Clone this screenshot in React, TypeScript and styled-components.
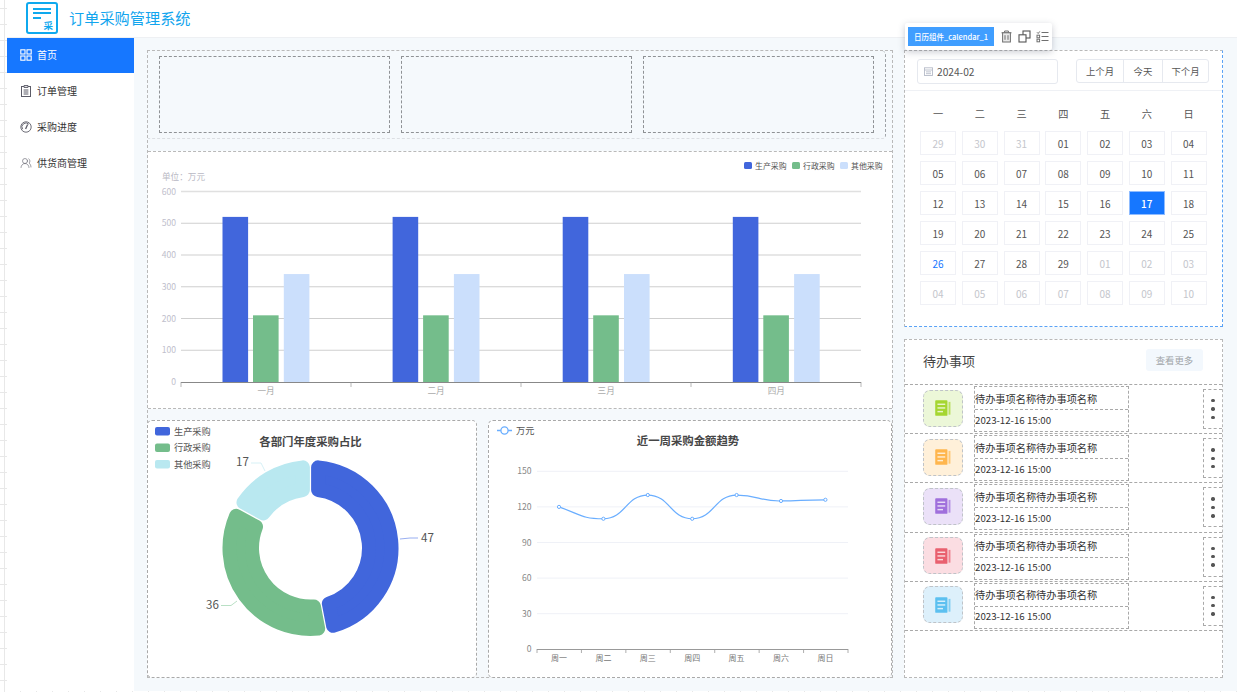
import React from "react";
import styled, { createGlobalStyle } from "styled-components";
import { UsersRound } from "lucide-react";

const Global = createGlobalStyle`
  html, body { margin: 0; padding: 0; background: #fff; }
  body { font-family: "Noto Sans CJK SC", "Noto Sans", sans-serif; color: #333; }
  * { box-sizing: border-box; }
`;
const DASH = "#a9a9a9";
const OUTER = "#b9b9b9";
const PAGE = "#f5f9fc";
const Canvas = styled.div`
  width: 1237px; height: 692px; overflow: hidden; padding-left: 7px; position: relative;
  background-color: #fff;
  background-image: linear-gradient(#e8e8e8 1px, transparent 1px), linear-gradient(90deg, #e8e8e8 1px, transparent 1px);
  background-size: 16px 16px; background-position: 4px 8px;
`;
const Header = styled.header`
  height: 38px; background: #fff; border-bottom: 1px solid #eef0f3; display: flex; align-items: center; padding-left: 19px; gap: 11px;
`;
const AppTitle = styled.div`font-size: 15.2px; color: #12a5ee; line-height: 1; margin-top: -1px;`;
const LogoBox = styled.div`
  width: 32px; height: 32px; border: 2px solid #0fa9ee; border-radius: 3px; position: relative; background: #fff; margin-top: -1px;
`;
const LogoBar = styled.span<{ $w: number; $t: number }>`
  position: absolute; left: 5px; top: ${p => p.$t}px; width: ${p => p.$w}px; height: 2px; background: #0fa9ee;
`;
const LogoChar = styled.span`
  position: absolute; right: 3px; bottom: 2px; font-size: 9.5px; line-height: 10px; font-weight: 700; color: #0fa9ee;
`;
const Body = styled.div`display: flex; height: 653px;`;
const Sidebar = styled.nav`width: 127px; background: #fff; flex: none;`;
const MenuItem = styled.div<{ $active?: boolean }>`
  height: ${p => (p.$active ? 35 : 36)}px; margin-bottom: ${p => (p.$active ? 1 : 0)}px;
  display: flex; align-items: center; gap: 5px; padding: 0 0 ${p => (p.$active ? 2 : 3)}px 13px; font-size: 10px;
  background: ${p => (p.$active ? "#1677ff" : "#fff")}; color: ${p => (p.$active ? "#fff" : "#333")};
`;
const Main = styled.main`
  flex: 1; background: ${PAGE}; display: flex; gap: 11px; padding: 12px 14px 13px 13px;
`;
const LeftCol = styled.div`
  width: 746px; flex: none; border: 1px dashed ${OUTER};
  display: flex; flex-direction: column; gap: 11px;
`;
const TopBlock = styled.div`
  height: 88px; width: 738px; margin-bottom: 1px; border-right: 1px dashed #9fa3a7; border-bottom: 1px dashed #dcdfe3; border-radius: 0 4px 4px 0;
  display: flex; gap: 11px; padding: 5px 11px 5px 11px; flex: none;
`;
const StatBox = styled.div`flex: 1; border: 1px dashed #8f9295; background: ${PAGE};`;
const BarPanel = styled.section`
  height: 258px; flex: none; background: #fff; border-top: 1px dashed ${OUTER}; border-bottom: 1px dashed ${OUTER};
`;
const BottomRow = styled.div`flex: 1; display: flex; gap: 11px; min-height: 0; margin: 0 -1px -1px -1px;`;
const ChartCard = styled.section<{ $w: number }>`
  width: ${p => p.$w}px; background: #fff; border: 1px dashed ${DASH}; border-radius: 5px; flex: none; overflow: hidden;
`;
const Chart = styled.svg`display: block; text { font-family: "Noto Sans CJK SC", "Noto Sans", sans-serif; }`;
const RightCol = styled.div`
  width: 319px; flex: none; display: flex; flex-direction: column; gap: 12px; position: relative;
`;
const Calendar = styled.section`
  height: 277px; flex: none; background: #fff; border: 1px dashed #5aa2f5; border-left-color: ${OUTER}; border-top-color: ${OUTER};
  position: relative;
`;
const CalTop = styled.div`
  height: 40px; display: flex; justify-content: space-between; align-items: flex-start; padding: 8px 13px 0 12px; border-bottom: 1px solid #eff1f5;
`;
const MonthInput = styled.div`
  width: 141px; height: 25px; border: 1px solid #e6e9ef; border-radius: 3px; display: flex; align-items: center; gap: 4px; padding-left: 6px;
  font-size: 10.2px; color: #555;
`;
const BtnGroup = styled.div`display: flex; height: 24px; border: 1px solid #e6e9ef; border-radius: 3px;`;
const CalBtn = styled.div<{ $w: number }>`
  width: ${p => p.$w}px; display: flex; align-items: center; justify-content: center; font-size: 9.4px; color: #555;
  & + & { border-left: 1px solid #e6e9ef; }
`;
const Weeks = styled.div`
  display: grid; grid-template-columns: repeat(7, 36px); column-gap: 5.75px; padding: 16px 0 0 15px; height: 40px;
`;
const Week = styled.div`font-size: 10.2px; line-height: 14px; text-align: center; color: #555;`;
const Days = styled.div`
  display: grid; grid-template-columns: repeat(7, 36px); column-gap: 5.75px; row-gap: 6px; grid-auto-rows: 24px; padding-left: 15px;
`;
const Day = styled.div<{ $k?: string }>`
  border: 1px solid ${p => (p.$k === "sel" ? "#8fbcff" : "#f0f1f6")}; display: flex; align-items: center; justify-content: center; font-size: 10px;
  background: ${p => (p.$k === "sel" ? "#1677ff" : "#fff")};
  font-weight: ${p => (p.$k === "sel" ? 500 : 400)};
  color: ${p => (p.$k === "sel" ? "#fff" : p.$k === "off" ? "#c4c6cc" : p.$k === "blue" ? "#1677ff" : "#555")};
`;
const Toolbar = styled.div`
  position: absolute; left: 0; top: -28px; width: 147px; height: 27px; background: #fff; border-radius: 2px; box-shadow: 0 2px 7px rgba(60,70,90,.28);
  display: flex; align-items: center; padding-left: 3px; gap: 5px; color: #6f6f6f; z-index: 3;
`;
const Badge = styled.div`
  width: 86px; height: 19px; background: #409eff; color: #fff; font-size: 7.5px; font-weight: 500; display: flex; align-items: center; justify-content: center; margin-right: 1px; white-space: nowrap;
`;
const Todo = styled.section`
  flex: 1; background: #fff; border: 1px dashed ${OUTER}; min-height: 0;
`;
const TodoHead = styled.div`
  height: 44px; display: flex; align-items: center; justify-content: space-between; padding: 0 19px 4px 18px;
`;
const TodoTitle = styled.h2`margin: 1px 0 0; font-size: 13px; font-weight: 400; color: #444;`;
const MoreBtn = styled.div`
  width: 57px; height: 22px; border-radius: 3px; background: #f3f8fd; font-size: 9.4px; color: #a0a4a8; display: flex; align-items: center; justify-content: center;
`;
const Row = styled.div`
  height: 49.2px; border-top: 1px dashed ${DASH}; display: flex; align-items: center; position: relative;
  &:last-child { height: 50px; border-bottom: 1px dashed ${DASH}; }
`;
const IconBox = styled.div<{ $bg: string }>`
  width: 40px; height: 37px; border: 1px dashed #bfc3c8; border-radius: 7px; margin: -2px 0 0 18px; background: ${p => p.$bg}; display: flex; align-items: center; justify-content: center; flex: none;
`;
const TextBox = styled.div`
  width: 155px; height: 46px; margin-left: 11px; border: 1px dashed ${DASH}; display: flex; flex-direction: column; flex: none;
`;
const TodoName = styled.div`
  height: 23px; display: flex; align-items: center; font-size: 10.2px; color: #333; border-bottom: 1px dashed ${DASH}; white-space: nowrap;
`;
const TodoTime = styled.div`flex: 1; display: flex; align-items: center; font-size: 9.7px; color: #333; padding-bottom: 2px;`;
const Kebab = styled.div`
  margin-left: auto; width: 19px; height: 40px; border: 1px dashed ${DASH}; border-right: none; display: flex; flex-direction: column; align-items: center; justify-content: center; gap: 5px;
`;
const Dot = styled.span`width: 3.4px; height: 3.4px; border-radius: 50%; background: #555;`;

const GridIcon = () => (
  <svg width="12" height="12" viewBox="0 0 12 12" fill="none" stroke="#fff" strokeWidth="1.1">
    <rect x=".8" y=".8" width="4.2" height="4.2" /><rect x="7" y=".8" width="4.2" height="4.2" />
    <rect x=".8" y="7" width="4.2" height="4.2" /><rect x="7" y="7" width="4.2" height="4.2" />
  </svg>
);
const ClipIcon = () => (
  <svg width="12" height="12" viewBox="0 0 12 12" fill="none" stroke="#5c5c68" strokeWidth="1">
    <rect x="1.5" y="1.5" width="9" height="10" />
    <path d="M4 .6h4v1.8H4z" fill="#fff" />
    <path d="M3.6 5h4.8M3.6 7h4.8M3.6 9h4.8" />
  </svg>
);
const GaugeIcon = () => (
  <svg width="12" height="12" viewBox="0 0 12 12" fill="none" stroke="#5c5c68" strokeWidth=".9">
    <circle cx="6" cy="6" r="5.2" />
    <path d="M2.6 8.2A4 4 0 0 1 8.8 3.2" />
    <path d="M7.6 3.6 5.6 8" strokeWidth="1.3" />
  </svg>
);
const TrashIcon = () => (
  <svg width="13" height="13" viewBox="0 0 13 13" fill="none" stroke="currentColor" strokeWidth="1">
    <path d="M1.5 2.8h10M4.6 2.8V1h3.8v1.8" />
    <rect x="2.6" y="2.8" width="7.8" height="9.2" fill="#e9e9e9" />
    <path d="M5 5.2v4.6M8 5.2v4.6" />
  </svg>
);
const CopyIcon = () => (
  <svg width="13" height="13" viewBox="0 0 13 13" fill="none" stroke="#555" strokeWidth="1.1">
    <rect x="5" y="1" width="7" height="7" />
    <rect x="1" y="4.8" width="7" height="7.2" fill="#fff" />
  </svg>
);
const ListIcon = () => (
  <svg width="13" height="13" viewBox="0 0 13 13" fill="none" stroke="currentColor" strokeWidth="1">
    <path d="M5.5 2.5h7M5.5 6.5h7M5.5 10.5h7" />
    <path d="M1 2.3l1.2 1.2L3.8 1.4" />
    <rect x="1" y="5.2" width="2.6" height="2.6" />
    <rect x="1" y="9.2" width="2.6" height="2.6" />
  </svg>
);
const CalIcon = () => (
  <svg width="9" height="9" viewBox="0 0 9 9" fill="none" stroke="#b6bbc8" strokeWidth=".9">
    <rect x=".5" y=".8" width="8" height="7.7" />
    <path d="M.5 3h8M2 4.9h5M2 6.7h5" />
  </svg>
);
const NoteIcon = ({ c }: { c: string }) => (
  <svg width="20" height="20" viewBox="0 0 18 18">
    <rect x="2" y="2" width="11" height="14" rx=".8" fill={c} />
    <rect x="14" y="3.5" width="1.7" height="11.5" fill={c} opacity=".7" />
    <rect x="4" y="5" width="7" height="1.3" fill="#fff" opacity=".75" />
    <rect x="4" y="8.3" width="7" height="1.3" fill="#fff" opacity=".75" />
    <rect x="4" y="11.6" width="5" height="1.3" fill="#fff" opacity=".75" />
  </svg>
);

const BarChart = () => {
  const y = (v: number) => 382 - (v * 190.5) / 600;
  return (
    <Chart width="744" height="256" viewBox="148 152 744 256">
      <text x="162" y="180" fontSize="8.6" fill="#b9b9c4">单位：万元</text>
      {[600, 500, 400, 300, 200, 100].map(v => (
        <line key={v} x1="181" x2="861" y1={y(v)} y2={y(v)} stroke={v === 600 ? "#e0e0e0" : "#c9c9c9"} strokeWidth={v === 600 ? 1.4 : 0.9} />
      ))}
      {[0, 100, 200, 300, 400, 500, 600].map(v => (
        <text key={v} x="176" y={y(v) + 3} fontSize="8.6" textAnchor="end" fill="#c0c0cc">{v}</text>
      ))}
      {["一月", "二月", "三月", "四月"].map((m, i) => {
        const d = i * 170.1;
        return (
          <g key={m}>
            <rect x={222.5 + d} y={y(520)} width="25.6" height={y(0) - y(520)} fill="#4166dc" />
            <rect x={253 + d} y={y(210)} width="25.6" height={y(0) - y(210)} fill="#74bd8b" />
            <rect x={283.8 + d} y={y(340)} width="25.6" height={y(0) - y(340)} fill="#cbdffc" />
            <text x={266 + d} y="394" fontSize="8.6" textAnchor="middle" fill="#aaa">{m}</text>
          </g>
        );
      })}
      <line x1="181" x2="861" y1="382.5" y2="382.5" stroke="#888" strokeWidth="1" />
      {[181, 351, 521, 691, 861].map(x => <line key={x} x1={x} x2={x} y1="382" y2="387" stroke="#999" strokeWidth=".7" />)}
      {[["生产采购", 744, "#4166dc"], ["行政采购", 792, "#74bd8b"], ["其他采购", 840, "#cbdffc"]].map(([t, x, c]) => (
        <g key={t as string}>
          <rect x={x as number} y="162" width="8" height="7" rx="1.5" fill={c as string} />
          <text x={(x as number) + 11} y="168.5" fontSize="7.9" fill="#555">{t}</text>
        </g>
      ))}
    </Chart>
  );
};

function seg(cx: number, cy: number, R: number, r: number, a0: number, a1: number, rad: number, gap: number) {
  const P = (rho: number, a: number) => {
    const t = ((a - 90) * Math.PI) / 180;
    return `${(cx + rho * Math.cos(t)).toFixed(2)} ${(cy + rho * Math.sin(t)).toFixed(2)}`;
  };
  const Ro = R - rad, Ri = r + rad, d = rad + gap;
  const off = (rho: number) => (Math.asin(d / rho) * 180) / Math.PI;
  const large = a1 - a0 > 180 ? 1 : 0;
  return `M${P(Ro, a0 + off(Ro))} A${Ro} ${Ro} 0 ${large} 1 ${P(Ro, a1 - off(Ro))} L${P(Ri, a1 - off(Ri))} A${Ri} ${Ri} 0 ${large} 0 ${P(Ri, a0 + off(Ri))} Z`;
}
const Ring = ({ a0, a1, c }: { a0: number; a1: number; c: string }) => (
  <path d={seg(310.5, 548, 88, 51.5, a0, a1, 7, 0.6)} fill={c} stroke={c} strokeWidth="14" strokeLinejoin="round" />
);
const PieChart = () => (
  <Chart width="328" height="257" viewBox="148 421 328 257">
    {[["生产采购", 427, "#4166dc"], ["行政采购", 443.5, "#74bd8b"], ["其他采购", 460, "#b9e8f0"]].map(([t, y, c]) => (
      <g key={t as string}>
        <rect x="155" y={y as number} width="15" height="8.5" rx="2" fill={c as string} />
        <text x="174" y={(y as number) + 7.5} fontSize="9.2" fill="#555">{t}</text>
      </g>
    ))}
    <text x="310.5" y="446" fontSize="11.4" fontWeight="700" fill="#464646" textAnchor="middle">各部门年度采购占比</text>
    <Ring a0={0} a1={169.2} c="#4166dc" />
    <Ring a0={169.2} a1={298.8} c="#74bd8b" />
    <Ring a0={298.8} a1={360} c="#b9e8f0" />
    <polyline points="400,539 410,538 418,538" fill="none" stroke="#7f9bee" strokeWidth=".8" />
    <text x="421" y="541.5" fontSize="11.6" fill="#555">47</text>
    <polyline points="237,601 231,605.5 221,605.5" fill="none" stroke="#a7d8b6" strokeWidth=".8" />
    <text x="206" y="609" fontSize="11.6" fill="#555">36</text>
    <polyline points="265,471 261,463 251,463" fill="none" stroke="#cdeef4" strokeWidth=".8" />
    <text x="236" y="466" fontSize="11.6" fill="#555">17</text>
  </Chart>
);
const LineChart = () => {
  const yy = (v: number) => 649.3 - (v * 178) / 150;
  const vals = [120, 110, 130, 110, 130, 125, 126];
  const pts = vals.map((v, i) => [559 + i * 44.4, yy(v)]);
  const tan = [0.35, 0, 0, 0, 0, -0.02, 0];
  let d = `M${pts[0][0]} ${pts[0][1]}`;
  for (let i = 1; i < pts.length; i++) {
    const [x0, y0] = pts[i - 1], [x1, y1] = pts[i];
    const h = (x1 - x0) * 0.5;
    d += ` C${x0 + h} ${y0 + tan[i - 1] * h} ${x1 - h} ${y1 - tan[i] * h} ${x1} ${y1}`;
  }
  return (
    <Chart width="402" height="257" viewBox="489 421 402 257">
      <line x1="497" x2="512" y1="430.5" y2="430.5" stroke="#6aaeff" strokeWidth="1.4" />
      <circle cx="504.5" cy="430.5" r="3.6" fill="#fff" stroke="#6aaeff" strokeWidth="1.3" />
      <text x="516" y="434" fontSize="9.2" fill="#555">万元</text>
      <text x="688" y="445" fontSize="11.4" fontWeight="700" fill="#464646" textAnchor="middle">近一周采购金额趋势</text>
      {[150, 120, 90, 60, 30].map(v => <line key={v} x1="537" x2="848" y1={yy(v)} y2={yy(v)} stroke="#eff1f7" />)}
      {[0, 30, 60, 90, 120, 150].map(v => <text key={v} x="531.5" y={yy(v) + 3} fontSize="8.6" textAnchor="end" fill="#888">{v}</text>)}
      <line x1="537" x2="848" y1="649.5" y2="649.5" stroke="#999" />
      {[0, 1, 2, 3, 4, 5, 6, 7].map(i => <line key={i} x1={537 + i * 44.43} x2={537 + i * 44.43} y1="649" y2="653" stroke="#999" strokeWidth=".8" />)}
      {["周一", "周二", "周三", "周四", "周五", "周六", "周日"].map((t, i) => (
        <text key={t} x={559 + i * 44.4} y="660.5" fontSize="8" textAnchor="middle" fill="#777">{t}</text>
      ))}
      <path d={d} fill="none" stroke="#6aaeff" strokeWidth="1.2" />
      {pts.map(([x, y], i) => <circle key={i} cx={x} cy={y} r="1.6" fill="#fff" stroke="#6aaeff" strokeWidth="1" />)}
    </Chart>
  );
};

type D = [string, string?];
const days: D[] = [
  ["29", "off"], ["30", "off"], ["31", "off"], ["01"], ["02"], ["03"], ["04"],
  ["05"], ["06"], ["07"], ["08"], ["09"], ["10"], ["11"],
  ["12"], ["13"], ["14"], ["15"], ["16"], ["17", "sel"], ["18"],
  ["19"], ["20"], ["21"], ["22"], ["23"], ["24"], ["25"],
  ["26", "blue"], ["27"], ["28"], ["29"], ["01", "off"], ["02", "off"], ["03", "off"],
  ["04", "off"], ["05", "off"], ["06", "off"], ["07", "off"], ["08", "off"], ["09", "off"], ["10", "off"],
];
const todos = [
  ["#ecf7d8", "#a5d631"], ["#fff0d9", "#ffb64d"], ["#ebe1f8", "#a070dc"], ["#fbdde2", "#e9606f"], ["#ddf0fb", "#5cc0f0"],
];

export default function App() {
  return (
    <Canvas>
      <Global />
      <Header>
        <LogoBox>
          <LogoBar $w={18} $t={4} /><LogoBar $w={18} $t={8} /><LogoBar $w={8} $t={13} />
          <LogoChar>采</LogoChar>
        </LogoBox>
        <AppTitle>订单采购管理系统</AppTitle>
      </Header>
      <Body>
        <Sidebar>
          <MenuItem $active><GridIcon />首页</MenuItem>
          <MenuItem><ClipIcon />订单管理</MenuItem>
          <MenuItem><GaugeIcon />采购进度</MenuItem>
          <MenuItem><UsersRound size={12} strokeWidth={1.2} color="#5c5c68" />供货商管理</MenuItem>
        </Sidebar>
        <Main>
          <LeftCol>
            <TopBlock><StatBox /><StatBox /><StatBox /></TopBlock>
            <BarPanel><BarChart /></BarPanel>
            <BottomRow>
              <ChartCard $w={330}><PieChart /></ChartCard>
              <ChartCard $w={404}><LineChart /></ChartCard>
            </BottomRow>
          </LeftCol>
          <RightCol>
            <Calendar>
              <Toolbar>
                <Badge>日历组件_calendar_1</Badge>
                <TrashIcon />
                <CopyIcon />
                <ListIcon />
              </Toolbar>
              <CalTop>
                <MonthInput><CalIcon />2024-02</MonthInput>
                <BtnGroup>
                  <CalBtn $w={46}>上个月</CalBtn><CalBtn $w={39}>今天</CalBtn><CalBtn $w={46}>下个月</CalBtn>
                </BtnGroup>
              </CalTop>
              <Weeks>{["一", "二", "三", "四", "五", "六", "日"].map(w => <Week key={w}>{w}</Week>)}</Weeks>
              <Days>{days.map(([t, k], i) => <Day key={i} $k={k}>{t}</Day>)}</Days>
            </Calendar>
            <Todo>
              <TodoHead><TodoTitle>待办事项</TodoTitle><MoreBtn>查看更多</MoreBtn></TodoHead>
              {todos.map(([bg, c], i) => (
                <Row key={i}>
                  <IconBox $bg={bg}><NoteIcon c={c} /></IconBox>
                  <TextBox>
                    <TodoName>待办事项名称待办事项名称</TodoName>
                    <TodoTime>2023-12-16 15:00</TodoTime>
                  </TextBox>
                  <Kebab><Dot /><Dot /><Dot /></Kebab>
                </Row>
              ))}
            </Todo>
          </RightCol>
        </Main>
      </Body>
    </Canvas>
  );
}
